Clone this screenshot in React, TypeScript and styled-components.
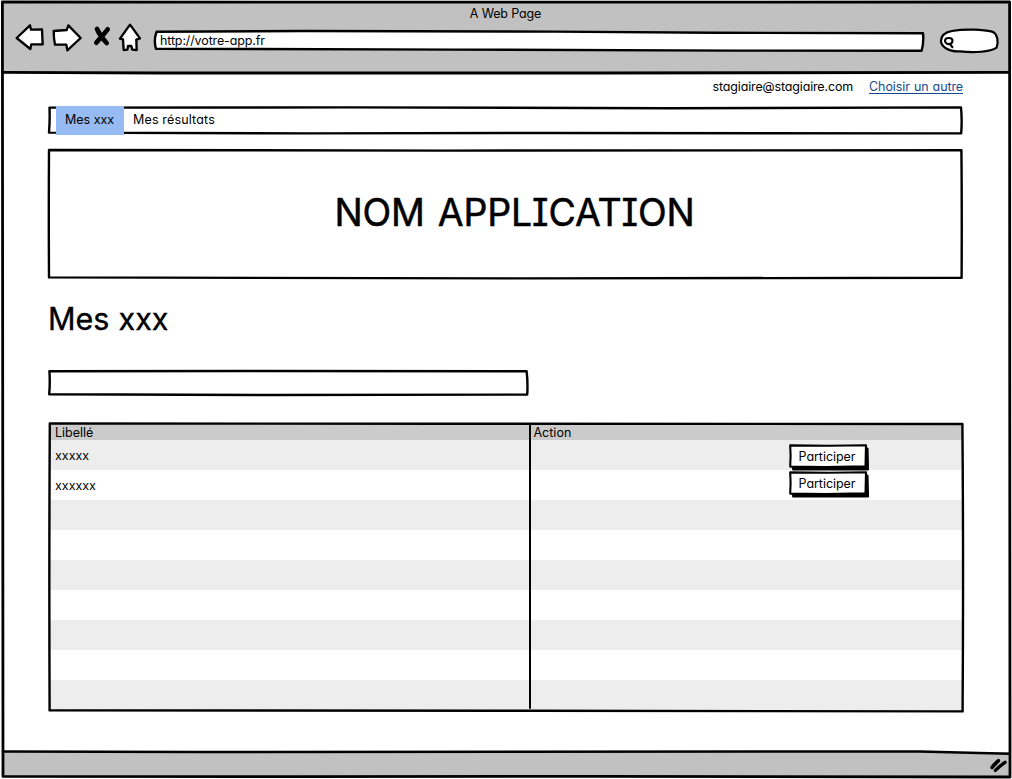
import React from 'react';
import styled, { createGlobalStyle } from 'styled-components';

const GlobalStyle = createGlobalStyle`
  *, *::before, *::after { box-sizing: border-box; }
  body {
    margin: 0;
    background: #fff;
    color: #000;
    font-family: Inter, "Liberation Sans", sans-serif;
    font-feature-settings: "cv11", "cv08";
    font-size: 12.5px;
  }
`;

/* Hand-drawn outline laid over the edges of a panel. */
const Outline = styled.svg<{ $weight?: number }>`
  position: absolute;
  inset: 0;
  width: 100%;
  height: 100%;
  overflow: visible;
  pointer-events: none;
  fill: none;
  stroke: #000;
  stroke-width: ${p => p.$weight ?? 2.4};
  stroke-linejoin: round;
  stroke-linecap: round;
`;

const BrowserWindow = styled.div`
  position: relative;
  width: 1012px;
  height: 779px;
  padding: 2px 2px 2px 3px;
  display: flex;
  flex-direction: column;
  overflow: hidden;
`;

const Chrome = styled.header`
  height: 70px;
  background: #c1c1c1;
  display: flex;
  flex-direction: column;
`;

const WindowTitle = styled.div`
  height: 23px;
  line-height: 23px;
  text-align: center;
  letter-spacing: -0.15px;
  padding-right: 2px;
`;

const Toolbar = styled.div`
  height: 32px;
  padding: 0 11px 0 12px;
  display: flex;
  align-items: center;
`;

const NavIcon = styled.svg<{ $w: number; $gap: number }>`
  flex: none;
  width: ${p => p.$w}px;
  height: 32px;
  margin: 0 ${p => p.$gap}px 7px 0;
  overflow: visible;
  fill: #fff;
  stroke: #000;
  stroke-width: 7;
  stroke-linejoin: round;
  stroke-linecap: round;
`;

const AddressBar = styled.div`
  position: relative;
  width: 770px;
  height: 22px;
  margin-right: 15px;
  padding-left: 6px;
  line-height: 21px;
  letter-spacing: -0.13px;
`;

const AddressText = styled.span`
  position: relative;
`;

const SearchBox = styled.svg`
  flex: none;
  width: 60px;
  height: 26px;
  overflow: visible;
  fill: none;
  stroke: #000;
  stroke-width: 2.2;
  stroke-linecap: round;
`;

const Page = styled.main`
  flex: 1;
  padding: 6px 47px 0 45px;
  display: flex;
  flex-direction: column;
`;

const Account = styled.div`
  height: 28px;
  display: flex;
  justify-content: flex-end;
  align-items: flex-start;
  gap: 16px;
  line-height: 17px;
  letter-spacing: -0.15px;
`;

const SwitchLink = styled.a`
  height: 16px;
  color: #134b8f;
  letter-spacing: -0.1px;
  word-spacing: 0.7px;
  border-bottom: 1px solid #134b8f;
`;

const Menu = styled.nav`
  position: relative;
  height: 29px;
  padding-left: 8px;
  display: flex;
`;

const MenuItem = styled.a<{ $active?: boolean }>`
  position: relative;
  padding: 0 9px;
  line-height: 27px;
  letter-spacing: ${p => (p.$active ? '0' : '0.16px')};
  width: ${p => (p.$active ? '68px' : 'auto')};
  white-space: nowrap;
  background: ${p => (p.$active ? '#95bbf2' : 'transparent')};
`;

const Hero = styled.section`
  position: relative;
  height: 130px;
  margin-top: 14px;
  padding: 0 0 3px 18px;
  display: flex;
  align-items: center;
  justify-content: center;
`;

const AppName = styled.h1`
  margin: 0;
  font-size: 37.5px;
  font-weight: 400;
  line-height: 46px;
  letter-spacing: -0.15px;
  word-spacing: 2.5px;
  -webkit-text-stroke: 0.5px #000;
`;

const Heading = styled.h2`
  margin: 20px 0 0;
  height: 40px;
  line-height: 40px;
  font-size: 30.5px;
  font-weight: 400;
  letter-spacing: -0.1px;
  word-spacing: 1px;
  -webkit-text-stroke: 0.35px #000;
`;

const TextField = styled.div`
  position: relative;
  width: 480px;
  height: 26px;
  margin-top: 31px;
`;

const Grid = styled.div`
  position: relative;
  height: 290px;
  margin-top: 26px;
  padding: 2px 1px 0 2px;
`;

const GridRow = styled.div<{ $fill: string; $h: number }>`
  display: grid;
  grid-template-columns: 480px 1fr;
  height: ${p => p.$h}px;
  background: ${p => p.$fill};
`;

const Cell = styled.div<{ $pad?: number; $line: number }>`
  padding-left: ${p => p.$pad ?? 5}px;
  line-height: ${p => p.$line}px;
`;

const ActionCell = styled.div<{ $top: number }>`
  display: flex;
  align-items: flex-start;
  padding: ${p => p.$top}px 0 0 259px;
`;

const JoinButton = styled.button`
  position: relative;
  width: 80px;
  height: 27px;
  margin: 0;
  padding: 0 4px 2px 0;
  border: 0;
  background: none;
  font: inherit;
  font-feature-settings: inherit;
  line-height: 24px;
  letter-spacing: -0.05px;
  color: #000;
  text-align: center;
`;

const ButtonFace = styled.span`
  position: relative;
`;

const StatusBar = styled.footer`
  height: 25px;
  padding: 2px 2px 0 0;
  background: #c1c1c1;
  display: flex;
  align-items: center;
  justify-content: flex-end;
`;

const Grip = styled.svg`
  width: 18px;
  height: 16px;
  overflow: visible;
  fill: none;
  stroke: #000;
  stroke-width: 3.4;
  stroke-linecap: round;
`;

const rows = ['xxxxx', 'xxxxxx', '', '', '', '', '', '', ''];
const buttonTops = [4, 1];

function Participate() {
  return (
    <JoinButton type="button">
      <Outline $weight={2.1}>
        <path d="M4 4 L79 4 L79.5 26 L4 26 Z" fill="#000" strokeWidth="1" />
        <path d="M1.2 1.4 L40 1.8 L77 1.2 L76.5 22.2 L36 23 L1.2 22.6 Q2 12 1.2 1.4 Z" fill="#fff" />
      </Outline>
      <ButtonFace>Participer</ButtonFace>
    </JoinButton>
  );
}

export default function App() {
  return (
    <BrowserWindow>
      <GlobalStyle />
      <Chrome>
        <WindowTitle>A Web Page</WindowTitle>
        <Toolbar>
          <NavIcon viewBox="45 64 84 96" $w={28} $gap={8}>
            <path d="M50 112 L90 74 L93 87 L126 86 L128 131 L94 131 L91 145 Z" />
          </NavIcon>
          <NavIcon viewBox="153 64 90 96" $w={30} $gap={12}>
            <path d="M161 91 L200 88 L205 74 L242 112 L202 149 L199 132 L165 132 Q161 112 161 91 Z" />
          </NavIcon>
          <NavIcon viewBox="279 64 51 96" $w={17} $gap={9}>
            <path d="M291 85 Q300 106 320 127 M323 86 Q309 104 289 126" fill="none" strokeWidth="14" />
          </NavIcon>
          <NavIcon viewBox="357 64 66 96" $w={22} $gap={13}>
            <path d="M390 72 L420 113 L409 117 L410 148 L397 147 L394 136 L384 136 L382 147 L371 148 L369 116 L360 114 Z" />
          </NavIcon>
          <AddressBar>
            <Outline>
              <path
                d="M2.6 1.8 L150 1 L400 1.6 L560 2.8 L769 3.2 Q770 12 767.6 20.8 L580 20.6 L300 19.6 L2 18.8 Q-0.6 10 2.6 1.8 Z"
                fill="#fff"
              />
            </Outline>
            <AddressText>http://votre-app.fr</AddressText>
          </AddressBar>
          <SearchBox viewBox="939 28 60 26">
            <path
              d="M952 31 C966 28.4 984 29.8 992 31.6 C998 33.5 998.6 43 996.6 47.6 C990 52 974 53 960 51.4 C948 52 940.6 46 941 40.5 C941.4 35 946 32 952 31 Z"
              fill="#fff"
            />
            <path d="M948.4 38 Q953 37.8 952.4 41.6 Q951 45 947.4 44 Q943.8 42 945.6 39 Q946.6 38 948.4 38 M950 44 L952.4 47.2" />
          </SearchBox>
        </Toolbar>
      </Chrome>

      <Page>
        <Account>
          <span>stagiaire@stagiaire.com</span>
          <SwitchLink>Choisir un autre</SwitchLink>
        </Account>

        <Menu>
          <Outline>
            <path d="M1.5 1.6 L300 1.4 L620 2.2 L913 1.4 Q914.2 14 913.2 27.4 L500 27 L260 27.4 L1 26.6 Q2 14 1.5 1.6 Z" />
          </Outline>
          <MenuItem $active>Mes xxx</MenuItem>
          <MenuItem>Mes résultats</MenuItem>
        </Menu>

        <Hero>
          <Outline>
            <path d="M1 1 L400 1.6 L913.4 1.2 Q914 60 913.6 128.8 L480 129.4 L1 128.4 Q0.6 60 1 1 Z" />
          </Outline>
          <AppName>NOM APPLICATION</AppName>
        </Hero>

        <Heading>Mes xxx</Heading>

        <TextField>
          <Outline>
            <path d="M1.4 1.2 L200 1 L478.6 1.2 Q480 13 479.2 24.6 L220 25 L1.2 24.2 Q2.2 13 1.4 1.2 Z" />
          </Outline>
        </TextField>

        <Grid>
          <GridRow $fill="#cbcbcb" $h={16}>
            <Cell $line={18}>Libellé</Cell>
            <Cell $line={18} $pad={3.5}>Action</Cell>
          </GridRow>
          {rows.map((label, i) => (
            <GridRow key={i} $fill={i % 2 ? '#fff' : '#ededed'} $h={30}>
              <Cell $line={32}>{label}</Cell>
              {label && (
                <ActionCell $top={buttonTops[i]}>
                  <Participate />
                </ActionCell>
              )}
            </GridRow>
          ))}
          <Outline>
            <path d="M1.8 1.4 L400 1.8 L914.4 2 Q915.6 140 914.6 289.4 L480 288.8 L1.6 288.4 Q1 140 1.8 1.4 Z" />
            <path d="M482 2 Q481.4 140 482 286" strokeWidth="2" />
          </Outline>
        </Grid>
      </Page>

      <StatusBar>
        <Grip viewBox="990 759 18 16">
          <path d="M992 768.5 Q995 764 998.4 761.6 M995.4 771.4 Q1001 766 1005 763.4 M992.4 768 L998 762.4" />
        </Grip>
      </StatusBar>
      <Outline $weight={2.8}>
        <path d="M2.4 2 L500 2.2 L1009.6 2 Q1008.8 300 1009.8 500 L1010 777 L600 776.4 L300 776.6 L3 776.4 Q1.4 400 2.4 2 Z" />
        <path d="M3 72.4 L160 73 L600 73 L1009 72.4" />
        <path d="M3 751.4 L200 752 L920 751.4 Q960 752.6 1009 753.8" strokeWidth="2.5" />
      </Outline>
    </BrowserWindow>
  );
}
